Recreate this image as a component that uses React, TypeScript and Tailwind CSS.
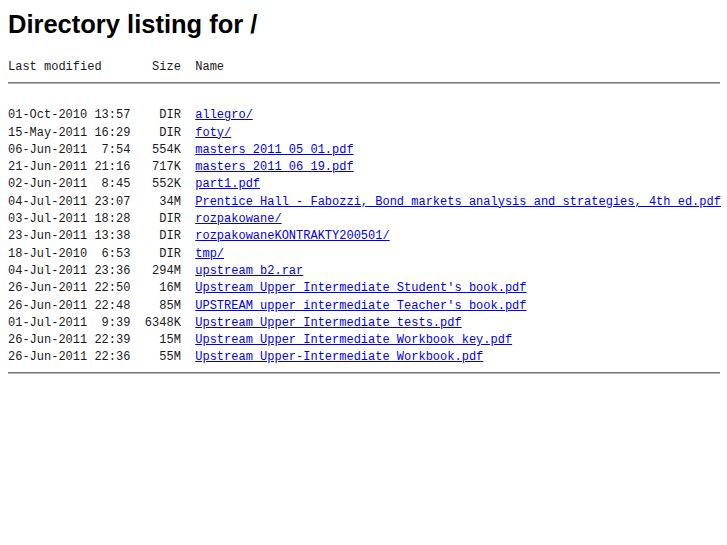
import React from "react";

interface Entry {
	date: string;
	size: string;
	name: string;
}

const entries: Entry[] = [
	{ date: "01-Oct-2010 13:57", size: "DIR", name: "allegro/" },
	{ date: "15-May-2011 16:29", size: "DIR", name: "foty/" },
	{ date: "06-Jun-2011  7:54", size: "554K", name: "masters 2011 05 01.pdf" },
	{ date: "21-Jun-2011 21:16", size: "717K", name: "masters 2011 06 19.pdf" },
	{ date: "02-Jun-2011  8:45", size: "552K", name: "part1.pdf" },
	{
		date: "04-Jul-2011 23:07",
		size: "34M",
		name: "Prentice Hall - Fabozzi, Bond markets analysis and strategies, 4th ed.pdf",
	},
	{ date: "03-Jul-2011 18:28", size: "DIR", name: "rozpakowane/" },
	{ date: "23-Jun-2011 13:38", size: "DIR", name: "rozpakowaneKONTRAKTY200501/" },
	{ date: "18-Jul-2010  6:53", size: "DIR", name: "tmp/" },
	{ date: "04-Jul-2011 23:36", size: "294M", name: "upstream b2.rar" },
	{ date: "26-Jun-2011 22:50", size: "16M", name: "Upstream Upper Intermediate Student's book.pdf" },
	{ date: "26-Jun-2011 22:48", size: "85M", name: "UPSTREAM upper intermediate Teacher's book.pdf" },
	{ date: "01-Jul-2011  9:39", size: "6348K", name: "Upstream Upper Intermediate tests.pdf" },
	{ date: "26-Jun-2011 22:39", size: "15M", name: "Upstream Upper Intermediate Workbook key.pdf" },
	{ date: "26-Jun-2011 22:36", size: "55M", name: "Upstream Upper-Intermediate Workbook.pdf" },
];

const Rule = () => (
	<div className="w-[712px] flex flex-col">
		<div className="h-px bg-[#7a7a7a]" />
		<div className="h-px bg-[#b4b4b4]" />
	</div>
);

export default function App() {
	return (
		<div className="min-h-[545px] bg-white text-black px-2 pt-[10px] overflow-hidden">
			<h1 className="text-[25.5px] font-bold leading-[28px] font-['Liberation_Sans',Arial,sans-serif]">
				Directory listing for /
			</h1>

			<div className="font-['Liberation_Mono','Courier_New',monospace] text-[12px] leading-[17.3px] text-[#1a1a1a] whitespace-pre">
				<div className="mt-[21px]">{"Last modified       Size  Name"}</div>
				<div className="mt-[6px]">
					<Rule />
				</div>
				<div className="mt-[23px]">
					{entries.map((e) => (
						<div key={e.name}>
							{e.date + e.size.padStart(7, " ") + "  "}
							<a href="#" className="text-[#0000ee] underline">
								{e.name}
							</a>
						</div>
					))}
				</div>
				<div className="mt-[5px]">
					<Rule />
				</div>
			</div>
		</div>
	);
}
